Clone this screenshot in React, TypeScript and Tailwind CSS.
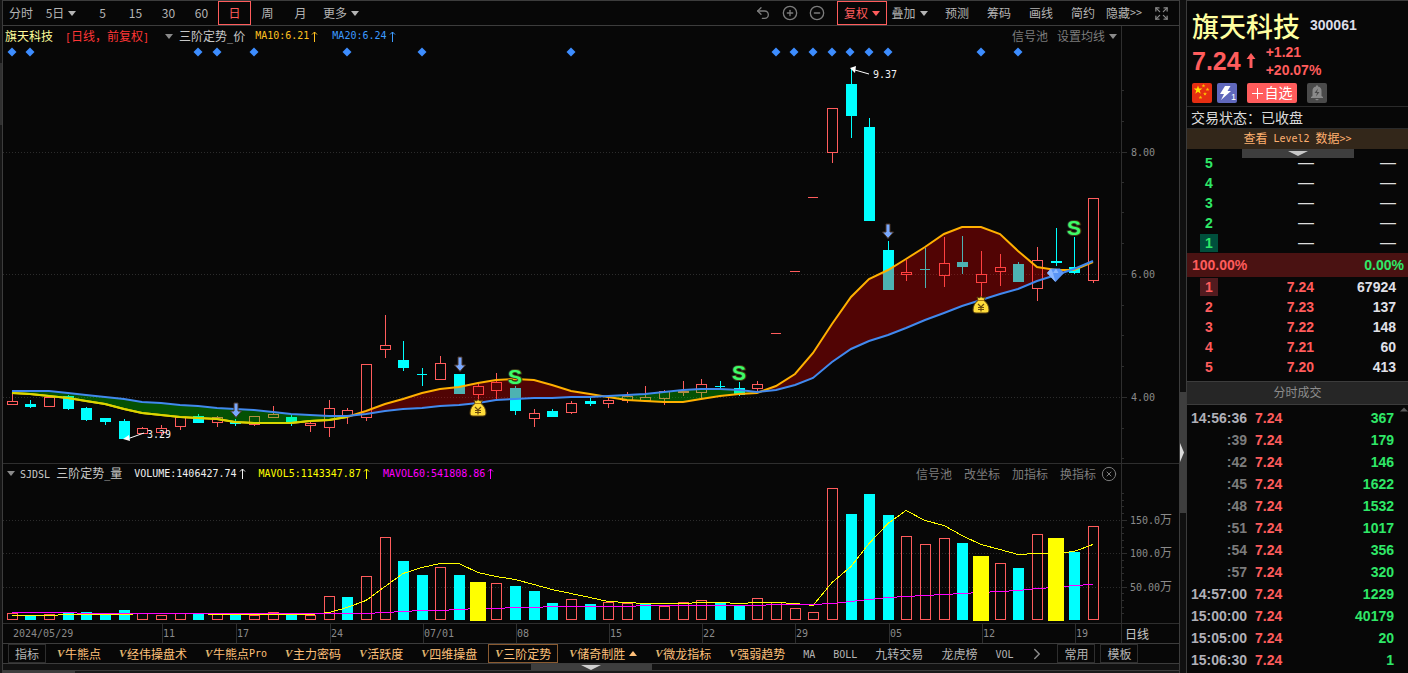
import React from "react";
import { Undo2, CirclePlus, CircleMinus, Expand, CircleX, ChevronRight } from "lucide-react";

const RED = "#ff5c5c";
const CYAN = "#00ffff";
const MONO = "'DejaVu Sans Mono', monospace";

type Candle = { up: boolean; high: number; top: number; bottom: number; low: number };

// [up, high, body top, body bottom, low] in chart units
const rawCandles: [number, number, number, number, number][] = [
  [1, 393, 401, 404, 404], [0, 400, 404, 406, 407], [1, 397, 397, 406, 406], [0, 395, 396, 408, 409],
  [0, 407, 408, 419, 420], [0, 418, 418, 421, 424], [0, 419, 421, 438, 438], [1, 427, 428, 433, 433],
  [1, 425, 428, 432, 434], [1, 417, 417, 426, 429], [0, 414, 416, 422, 422], [1, 416, 417, 422, 426],
  [0, 419, 422, 423, 425], [1, 416, 416, 424, 425], [1, 406, 414, 417, 417], [0, 415, 417, 422, 425],
  [1, 420, 423, 425, 431], [1, 400, 408, 427, 436], [1, 408, 410, 415, 423], [1, 364, 364, 417, 420],
  [1, 315, 345, 349, 357], [0, 341, 360, 367, 370], [0, 368, 374, 374, 385], [1, 356, 363, 379, 379],
  [0, 374, 374, 393, 393], [1, 384, 386, 394, 400], [1, 373, 382, 390, 399], [0, 386, 388, 410, 414],
  [1, 409, 413, 418, 426], [0, 409, 411, 416, 416], [1, 401, 403, 412, 413], [0, 398, 401, 403, 405],
  [1, 397, 400, 403, 407], [1, 392, 396, 400, 402], [1, 386, 397, 400, 400], [1, 390, 391, 398, 404],
  [1, 381, 391, 392, 395], [1, 379, 384, 392, 398], [0, 381, 386, 386, 388], [0, 382, 388, 394, 395],
  [1, 381, 384, 388, 391], [1, 333, 333, 333, 333], [1, 271, 271, 271, 271], [1, 197, 197, 197, 197],
  [1, 108, 108, 152, 162], [0, 69, 84, 115, 137], [0, 118, 127, 220, 220], [0, 241, 250, 289, 289],
  [1, 260, 272, 274, 280], [0, 248, 269, 269, 287], [1, 237, 263, 275, 286], [0, 236, 262, 266, 273],
  [1, 251, 274, 282, 296], [1, 254, 267, 271, 285], [0, 262, 264, 281, 281], [1, 247, 260, 288, 300],
  [0, 228, 261, 262, 265], [0, 237, 267, 272, 273], [1, 198, 198, 280, 282],
];
const candles: Candle[] = rawCandles.map(([u, high, top, bottom, low]) => ({ up: u === 1, high, top, bottom, low }));

const ma10 = [
  393, 394, 396, 398, 401, 404, 409, 413, 415, 417, 418, 419, 422, 423, 423, 423, 421, 420, 417, 411,
  404, 399, 393, 389, 387, 383, 380, 379, 380, 385, 391, 394, 397, 400, 401, 402, 402, 399, 396, 394,
  393, 386, 374, 353, 324, 297, 279, 270, 259, 247, 234, 227, 227, 234, 251, 267, 270, 270, 262,
];
const ma20 = [
  391, 391, 391, 393, 395, 397, 399, 402, 403, 405, 406, 408, 409, 410, 412, 414, 415, 416, 416, 414,
  411, 409, 408, 406, 405, 403, 400, 399, 398, 398, 397, 397, 396, 395, 394, 392, 390, 389, 389, 390,
  392, 390, 385, 378, 362, 349, 341, 335, 328, 320, 313, 306, 300, 294, 289, 281, 275, 269, 261,
];

// r: hollow red, c: solid cyan, y: highlighted wide bar
const volumes: [string, number][] = [
  ["r", 613], ["c", 616], ["r", 614], ["c", 613], ["c", 612], ["c", 615], ["c", 610], ["r", 613], ["r", 615],
  ["r", 613], ["c", 613], ["r", 614], ["c", 614], ["r", 615], ["r", 612], ["c", 615], ["r", 615], ["r", 596],
  ["c", 597], ["r", 576], ["r", 537], ["c", 561], ["c", 575], ["r", 567], ["c", 575], ["y", 582], ["r", 583],
  ["c", 586], ["c", 591], ["c", 603], ["r", 599], ["c", 604], ["r", 602], ["r", 603], ["c", 603], ["r", 606],
  ["r", 602], ["r", 600], ["c", 603], ["c", 606], ["r", 598], ["r", 602], ["r", 608], ["r", 612], ["r", 488],
  ["c", 514], ["c", 494], ["c", 515], ["r", 536], ["r", 544], ["r", 538], ["c", 543], ["y", 556], ["r", 563],
  ["c", 568], ["r", 534], ["y", 538], ["c", 552], ["r", 526],
];
const mavol5 = [
  615, 615, 615, 614, 614, 614, 614, 613, 613, 613, 613, 614, 614, 614, 614, 614, 614, 612, 607, 600,
  586, 573, 567, 563, 563, 572, 576, 579, 584, 589, 593, 597, 601, 602, 603, 603, 603, 602, 602, 603,
  602, 602, 603, 605, 582, 566, 543, 523, 510, 520, 525, 535, 544, 549, 554, 553, 553, 551, 544,
];
const mavol60 = [
  612, 612, 612, 612, 613, 613, 613, 613, 613, 613, 613, 613, 613, 613, 613, 613, 613, 613, 613, 613,
  612, 611, 610, 610, 609, 608, 608, 607, 607, 606, 606, 606, 606, 606, 605, 605, 605, 605, 605, 605,
  605, 604, 604, 604, 603, 601, 599, 597, 596, 595, 594, 593, 592, 591, 590, 588, 587, 585, 584,
];

const xAt = (i: number) => Math.floor(12.3 + i * 18.638);
const linePoints = (ys: number[]) => ys.map((y, i) => `${xAt(i)},${y}`).join(" ");

// Closed regions between the two averages, split wherever they cross.
function regions() {
  const out: { red: boolean; d: string }[] = [];
  let upper: string[] = [];
  let lower: string[] = [];
  const flush = (red: boolean) => {
    if (upper.length > 1) out.push({ red, d: `M${[...upper, ...lower.reverse()].join("L")}Z` });
    upper = [];
    lower = [];
  };
  for (let i = 0; i < ma10.length; i++) {
    const diff = ma20[i] - ma10[i];
    if (i > 0) {
      const prev = ma20[i - 1] - ma10[i - 1];
      if (prev * diff < 0) {
        const t = prev / (prev - diff);
        const x = xAt(i - 1) + t * (xAt(i) - xAt(i - 1));
        const y = ma10[i - 1] + t * (ma10[i] - ma10[i - 1]);
        upper.push(`${x},${y}`);
        lower.push(`${x},${y}`);
        flush(prev > 0);
        upper.push(`${x},${y}`);
        lower.push(`${x},${y}`);
      }
    }
    upper.push(`${xAt(i)},${ma10[i]}`);
    lower.push(`${xAt(i)},${ma20[i]}`);
  }
  flush(ma20[ma10.length - 1] > ma10[ma10.length - 1]);
  return out;
}

function DownMark({ x, y }: { x: number; y: number }) {
  return (
    <path
      d={`M${x - 2} ${y - 7}h4v8h3.5l-5.5 6.5l-5.500 -6.5h3.500z`}
      fill="#78a8ff"
      stroke="#4a3526"
      strokeWidth="1"
    />
  );
}

function SellMark({ x, y }: { x: number; y: number }) {
  return (
    <text
      x={x}
      y={y + 7}
      textAnchor="middle"
      fontFamily="'Liberation Sans', sans-serif"
      fontSize="21"
      fontWeight="700"
      fill="#3dfc68"
      stroke="#3a3a1c"
      strokeWidth="2"
      paintOrder="stroke"
    >
      S
    </text>
  );
}

function MoneyBag({ x, y }: { x: number; y: number }) {
  return (
    <g transform={`translate(${x} ${y})`}>
      <path
        d="M-4 -8L-1.500 -7L0 -8.500L2 -7L4.500 -8L3 -4.500C6 -2.500 8 1 8 5C8 7 7 8 5 8H-5C-7 8 -8 7 -8 5C-8 1 -6 -2.500 -3 -4.500Z"
        fill="#ffdc3a"
        stroke="#5a4010"
        strokeWidth="1"
      />
      <path d="M-3 -4.500H3" stroke="#a87a10" strokeWidth="1" />
      <path d="M-3 -1L0 2L3 -1M0 2V6.500M-3 2.500H3M-3 4.500H3" stroke="#6b4a0c" strokeWidth="1.200" fill="none" />
    </g>
  );
}

const diamondX = [12, 30, 198, 217, 254, 347, 422, 571, 776, 794, 813, 832, 850, 869, 888, 981, 1018];

function PriceChart() {
  return (
    <svg viewBox="3 46 1176 417" className="block h-auto w-full" role="img" aria-label="K线图">
      <g stroke="#2c2c2c" strokeDasharray="1 2" shapeRendering="crispEdges">
        <path d="M3 152.500H1121M3 274.500H1121M3 397.500H1121" />
      </g>
      <g stroke="#2e2e2e" shapeRendering="crispEdges">
        <path d="M1121.500 46V463" />
        <path d="M1121 152.500h6M1121 274.500h6M1121 397.500h6" />
        <path d="M1121 90.500h3M1121 121.500h3M1121 182.500h3M1121 212.500h3M1121 243.500h3M1121 305.500h3M1121 335.500h3M1121 366.500h3M1121 428.500h3M1121 458.500h3" />
      </g>
      <g fontFamily={MONO} fontSize="10" fill="#8a8a8a">
        <text x="1131" y="156">8.00</text>
        <text x="1131" y="278">6.00</text>
        <text x="1131" y="401">4.00</text>
      </g>
      {diamondX.map((x) => (
        <path key={x} d={`M${x} 47.500l4.500 4.500l-4.500 4.500l-4.500 -4.500z`} fill="#3d8dff" />
      ))}
      <g shapeRendering="crispEdges">
        {candles.map((c, i) => {
          const x = xAt(i);
          const color = c.up ? RED : CYAN;
          const flat = c.bottom === c.top;
          return (
            <g key={i}>
              {c.high < c.top && <rect x={x} y={c.high} width="1" height={c.top - c.high} fill={color} />}
              {c.low > c.bottom && <rect x={x} y={c.bottom} width="1" height={c.low - c.bottom + 1} fill={color} />}
              {flat || !c.up ? (
                <rect x={x - 5} y={c.top} width={flat ? 10 : 11} height={c.bottom - c.top + 1} fill={color} />
              ) : (
                <rect x={x - 4.5} y={c.top + 0.5} width="10" height={c.bottom - c.top} fill="none" stroke={color} />
              )}
            </g>
          );
        })}
        {regions().map((r, i) => (
          <path key={i} d={r.d} fill={r.red ? "#ff0000" : "#00ff00"} fillOpacity="0.3" />
        ))}
      </g>
      <polyline points={linePoints(ma10)} fill="none" stroke="#ffb000" strokeWidth="2" />
      <polyline points={linePoints(ma10.slice(0, 19))} fill="none" stroke="#d8d800" strokeWidth="2" />
      <polyline points={linePoints(ma20)} fill="none" stroke="#4189ee" strokeWidth="2" />

      <g fontFamily={MONO} fontSize="10" fill="#f2f2f2">
        <text x="147" y="438">3.29</text>
        <text x="873" y="78">9.37</text>
      </g>
      <path d="M144 433L130 438M869 74L855 70" stroke="#fff" fill="none" />
      <path d="M123 439l6 -4l1 6zM850 68l6 -2l-1 7z" fill="#fff" />

      <DownMark x={236} y={410} />
      <DownMark x={460} y={364} />
      <DownMark x={888} y={231} />
      <MoneyBag x={478} y={408} />
      <MoneyBag x={981} y={305} />
      <SellMark x={515} y={377} />
      <SellMark x={739} y={373} />
      <SellMark x={1074} y={228} />
      <g>
        <path d="M1051 268.500H1060L1064 273L1055.500 282L1047 273Z" fill="#5b95f5" />
        <path d="M1047 273L1051 268.500L1053 273L1055.500 282ZM1056 268.500L1058.500 273H1053Z" fill="#8db8ff" />
      </g>
    </svg>
  );
}

function VolumeChart() {
  const minor = [493, 500, 506, 513, 527, 533, 540, 547, 560, 567, 573, 580, 593, 600, 607, 613];
  return (
    <svg viewBox="3 483 1176 140" className="block h-auto w-full" role="img" aria-label="成交量">
      <path
        d="M3 520.500H1121M3 553.500H1121M3 587.500H1121"
        stroke="#2c2c2c"
        strokeDasharray="1 2"
        shapeRendering="crispEdges"
      />
      <path
        d={"M1121.500 483V623M1121 520.500h6M1121 553.500h6M1121 587.500h6" + minor.map((y) => `M1121 ${y + 0.5}h3`).join("")}
        stroke="#2e2e2e"
        shapeRendering="crispEdges"
      />
      <g fontFamily={MONO} fontSize="10" fill="#8a8a8a">
        {([["150.0", 524], ["100.0", 557], ["50.00", 591]] as [string, number][]).map(([t, y]) => (
          <text key={t} x="1130" y={y}>
            {t}
            <tspan fontFamily="'Noto Sans CJK SC', sans-serif" fontSize="12">万</tspan>
          </text>
        ))}
      </g>
      <g shapeRendering="crispEdges">
        {volumes.map(([k, y], i) =>
          k === "r" ? (
            <rect key={i} x={xAt(i) - 4.5} y={y + 0.5} width="10" height={619 - y} fill="none" stroke={RED} />
          ) : k === "c" ? (
            <rect key={i} x={xAt(i) - 5} y={y} width="11" height={620 - y} fill={CYAN} />
          ) : null,
        )}
        <polyline points={linePoints(mavol5.map((y) => y + 0.5))} fill="none" stroke="#ffff00" />
        <polyline points={linePoints(mavol60.map((y) => y + 0.5))} fill="none" stroke="#ff00ff" />
        {volumes.map(([k, y], i) =>
          k === "y" ? <rect key={i} x={xAt(i) - 8} y={y} width="16" height={621 - y} fill="#ffff00" /> : null,
        )}
      </g>
    </svg>
  );
}

function Mono({ children, className = "" }: { children: React.ReactNode; className?: string }) {
  return (
    <span className={`whitespace-pre font-['DejaVu_Sans_Mono',monospace] text-[10px] ${className}`}>{children}</span>
  );
}

function Caret({ className = "" }: { className?: string }) {
  return (
    <svg viewBox="0 0 8 5" className={`h-[5px] w-2 shrink-0 ${className}`} aria-hidden="true">
      <path d="M0 0H8L4 5Z" fill="currentColor" />
    </svg>
  );
}

function UpArrow() {
  return (
    <svg viewBox="0 0 7 11" className="h-[11px] w-[7px] shrink-0" aria-hidden="true">
      <path d="M3.500 11V1M1 3.500L3.500 1L6 3.500" stroke="currentColor" fill="none" />
    </svg>
  );
}

const periods = ["5", "15", "30", "60"];

function Toolbar() {
  const cell = "flex h-full items-center justify-center";
  return (
    <div className="flex h-[26px] items-center border-y border-[#3c3c3c] text-[#b4b4b4]">
      <button className={`${cell} w-9`}>分时</button>
      <button className={`${cell} mr-[3px] w-11 gap-1`}>5日<Caret /></button>
      {periods.map((p) => (
        <button key={p} className={`${cell} w-[33px]`}>{p}</button>
      ))}
      <button className={`${cell} w-[33px] border border-[#ff5c5c] text-[#ff5c5c]`}>日</button>
      <button className={`${cell} w-[33px]`}>周</button>
      <button className={`${cell} w-[33px]`}>月</button>
      <button className={`${cell} w-12 gap-1`}>更多<Caret /></button>
      <div className="flex-1" />
      <div className="mr-3 flex items-center gap-[11px] text-[#7c7c7c]">
        <button aria-label="撤销"><Undo2 size={16} strokeWidth={2} /></button>
        <button aria-label="放大"><CirclePlus size={16} strokeWidth={2} /></button>
        <button aria-label="缩小"><CircleMinus size={16} strokeWidth={2} /></button>
      </div>
      <button className={`${cell} w-[50px] gap-1 border border-[#ff5c5c] text-[#ff5c5c]`}>复权<Caret /></button>
      <button className={`${cell} w-[49px] gap-1 pr-1`}>叠加<Caret /></button>
      <button className={`${cell} w-[42px]`}>预测</button>
      <button className={`${cell} w-[42px]`}>筹码</button>
      <button className={`${cell} w-[42px]`}>画线</button>
      <button className={`${cell} w-[42px]`}>简约</button>
      <button className={`${cell} w-10`}>隐藏<Mono>&gt;&gt;</Mono></button>
      <button className={`${cell} mx-[10px] w-[15px] text-[#8a8a8a]`} aria-label="全屏"><Expand size={15} strokeWidth={2} /></button>
    </div>
  );
}

const dates: [string, string][] = [
  ["flex-[159]", "2024/05/29"], ["flex-[74]", "11"], ["flex-[94]", "17"], ["flex-[93]", "24"], ["flex-[93]", "07/01"],
  ["flex-[93]", "08"], ["flex-[93]", "15"], ["flex-[93]", "22"], ["flex-[94]", "29"], ["flex-[93]", "05"],
  ["flex-[93]", "12"], ["flex-[46]", "19"],
];

function Vip() {
  return (
    <span className="w-2 text-left font-['Liberation_Serif',serif] text-[11px] font-bold italic text-[#e0b870]">V</span>
  );
}

const vipTabs = ["牛熊点", "经伟操盘术", "牛熊点Pro", "主力密码", "活跃度", "四维操盘", "三阶定势", "储奇制胜", "微龙指标", "强弱趋势"];

function IndicatorTabs() {
  return (
    <div className="flex h-[21px] items-center overflow-hidden whitespace-nowrap border-y border-[#3c3c3c] pl-[5px] text-[#b4b4b4]">
      <button className="mr-[2px] h-[19px] w-[38px] shrink-0 border border-[#2e2e2e]">指标</button>
      {vipTabs.map((t) => (
        <button
          key={t}
          className={
            t === "三阶定势"
              ? "mx-[2px] flex h-[19px] shrink-0 items-center border border-[#8a5a30] px-[6px] text-[#ffc07a]"
              : "flex h-[19px] shrink-0 items-center px-[9px] text-[#ffc07a]"
          }
        >
          <Vip />
          {t === "牛熊点Pro" ? <>牛熊点<Mono>Pro</Mono></> : t}
          {t === "储奇制胜" && <Caret className="ml-1 rotate-180" />}
        </button>
      ))}
      <button className="shrink-0 px-[9px]"><Mono>MA</Mono></button>
      <button className="shrink-0 px-[9px]"><Mono>BOLL</Mono></button>
      <button className="shrink-0 px-[9px]">九转交易</button>
      <button className="shrink-0 px-[9px]">龙虎榜</button>
      <button className="shrink-0 px-[9px]"><Mono>VOL</Mono></button>
      <button className="shrink-0 px-[6px] text-[#8a8a8a]" aria-label="更多指标"><ChevronRight size={18} strokeWidth={2} /></button>
      <button className="ml-[5px] h-[19px] w-[38px] shrink-0 border border-[#2e2e2e]">常用</button>
      <button className="ml-[5px] h-[19px] w-[38px] shrink-0 border border-[#2e2e2e]">模板</button>
    </div>
  );
}

const asks = ["5", "4", "3", "2", "1"];
const bids: [string, string, string][] = [
  ["1", "7.24", "67924"], ["2", "7.23", "137"], ["3", "7.22", "148"], ["4", "7.21", "60"], ["5", "7.20", "413"],
];
const trades: [string, string][] = [
  ["14:56:36", "367"], [":39", "179"], [":42", "146"], [":45", "1622"], [":48", "1532"], [":51", "1017"],
  [":54", "356"], [":57", "320"], ["14:57:00", "1229"], ["15:00:00", "40179"], ["15:05:00", "20"], ["15:06:30", "1"],
];

const starPath = (cx: number, cy: number, r: number) =>
  "M" +
  Array.from({ length: 10 }, (_, k) => {
    const a = -Math.PI / 2 + (k * Math.PI) / 5;
    const q = k % 2 ? r * 0.4 : r;
    return `${(cx + q * Math.cos(a)).toFixed(2)} ${(cy + q * Math.sin(a)).toFixed(2)}`;
  }).join("L") +
  "Z";

function QuotePanel() {
  return (
    <aside className="w-[221px] shrink-0 border-t border-[#3c3c3c] font-['Liberation_Sans','Noto_Sans_CJK_SC',sans-serif] text-sm">
      <div className="flex h-11 items-center gap-[10px] pl-[5px] pt-1">
        <h1 className="font-['Noto_Sans_CJK_SC',sans-serif] text-[27px] font-medium leading-none text-[#ffffa0]">旗天科技</h1>
        <span className="font-bold text-[#dcdce8]">300061</span>
      </div>
      <div className="flex h-8 items-center pl-[5px] text-[#ff5c5c]">
        <span className="text-[25px] font-bold leading-none">7.24</span>
        <svg viewBox="0 0 10 16" className="ml-[5px] h-4 w-[10px]" aria-label="上涨">
          <path d="M5 0L9.500 6H6.500V15H3.500V6H0.500Z" fill="currentColor" />
        </svg>
        <div className="ml-[10px] font-bold leading-[18px]">
          <div>+1.21</div>
          <div>+20.07%</div>
        </div>
      </div>
      <div className="flex h-[30px] items-center border-b border-[#2a2a2a] pl-[5px] pt-[3px]">
        <svg viewBox="0 0 20 20" className="h-5 w-5" aria-label="中国">
          <rect width="20" height="20" rx="2" fill="#e62e12" />
          <path d={starPath(6, 7, 4.6)} fill="#ffe000" />
          <path
            d={starPath(11.5, 2.8, 2) + starPath(15.5, 6.5, 2) + starPath(13, 11, 2) + starPath(8.5, 14.5, 2)}
            fill="#ffc400"
          />
        </svg>
        <svg viewBox="0 0 20 20" className="ml-[5px] h-5 w-5" aria-label="闪电">
          <rect width="20" height="20" rx="2" fill="#6068bc" />
          <path d="M8 3H13.500L10.500 8H14L4 17L7 11H3Z" fill="#fff" />
          <text x="14" y="17" fontSize="9" fontFamily="'Liberation Sans', sans-serif" fill="#fff">1</text>
        </svg>
        <button className="ml-[10px] flex h-5 w-[50px] items-center justify-center rounded-[2px] bg-[#ff5c5c] text-white">
          <svg viewBox="0 0 11 11" className="mr-[2px] h-[11px] w-[11px]" aria-hidden="true">
            <path d="M5.500 0V11M0 5.500H11" stroke="#fff" />
          </svg>
          自选
        </button>
        <button className="ml-[10px]" aria-label="提醒">
          <svg viewBox="0 0 20 20" className="h-5 w-5">
            <rect width="20" height="20" rx="2" fill="#4a4a4a" />
            <path d="M4 15V14L5.500 13V8A4.500 4.500 0 0 1 9 3.500V2.500H11V3.500A4.500 4.500 0 0 1 14.500 8V13L16 14V15ZM8 16H12L10 17.500Z" fill="#8a8a8a" />
            <path d="M11 5.500L7.500 10H10L9 13.500L12.500 9H10Z" fill="#4a4a4a" />
          </svg>
        </button>
      </div>
      <div className="flex h-[22px] items-center border-b border-[#2a2a2a] pl-[4px] text-[#dcdcdc]">交易状态：已收盘</div>
      <div className="relative">
        <a href="#level2" className="flex h-5 items-center justify-center bg-[#33271a] text-xs text-[#ffb070]">
          查看<Mono> Level2 </Mono>数据<Mono>&gt;&gt;</Mono>
        </a>
        <div className="absolute left-[55px] top-5 flex h-[9px] w-28 justify-center bg-[#3e3e3e] pt-[2px] text-[#c8c8c8]">
          <svg viewBox="0 0 20 5" className="h-[5px] w-5" aria-hidden="true"><path d="M0 0H20L10 5Z" fill="currentColor" /></svg>
        </div>
      </div>
      <table className="mt-[4px] w-full table-fixed border-collapse font-bold">
        <tbody>
          {asks.map((n) => (
            <tr key={n} className="h-5 text-[#dcdcdc]">
              <td className="w-[43px] p-0 pl-[13px]">
                <span className={`block h-[18px] w-[18px] text-center leading-[18px] text-[#2fe868] ${n === "1" ? "bg-[#004f3c]" : ""}`}>{n}</span>
              </td>
              <td className="w-[84px] p-0 text-right text-base font-normal leading-5">—</td>
              <td className="p-0 pr-3 text-right text-base font-normal leading-5">—</td>
            </tr>
          ))}
        </tbody>
      </table>
      <div className="flex h-6 items-center justify-between bg-[#4a1212] pl-[5px] pr-1 font-bold">
        <span className="text-[#ff5c5c]">100.00%</span>
        <span className="text-[#2fe868]">0.00%</span>
      </div>
      <table className="w-full table-fixed border-collapse font-bold">
        <tbody>
          {bids.map(([n, price, vol]) => (
            <tr key={n} className="h-5 text-[#ff5c5c]">
              <td className="w-[43px] p-0 pl-[13px]">
                <span className={`block h-[18px] w-[18px] text-center leading-[18px] ${n === "1" ? "bg-[#521b1f]" : ""}`}>{n}</span>
              </td>
              <td className="w-[84px] p-0 text-right leading-5">{price}</td>
              <td className="p-0 pr-3 text-right leading-5 text-[#e0e0e8]">{vol}</td>
            </tr>
          ))}
        </tbody>
      </table>
      <h2 className="mt-[4px] flex h-6 items-center justify-center border-y border-[#3c3c3c] bg-[#262626] text-xs text-[#8c8c8c]">分时成交</h2>
      <div className="relative pt-[2px]">
        <svg viewBox="0 0 10 5" className="absolute right-0 top-[2px] h-[5px] w-2" aria-hidden="true">
          <path d="M5 0L10 5H0Z" fill="#5a5a5a" />
        </svg>
        <table className="w-full table-fixed border-collapse font-bold">
          <tbody>
            {trades.map(([time, vol]) => (
              <tr key={time} className="h-[22px]">
                <td className={`w-[60px] p-0 text-right ${time.startsWith(":") ? "text-[#7c7c7c]" : "text-[#b0b0b8]"}`}>{time}</td>
                <td className="w-[60px] p-0 pl-2 text-[#ff5c5c]">7.24</td>
                <td className="p-0 pr-[14px] text-right text-[#2fe868]">{vol}</td>
              </tr>
            ))}
          </tbody>
        </table>
      </div>
    </aside>
  );
}

export default function App() {
  return (
    <div className="flex h-screen overflow-hidden bg-[#070707] font-['Noto_Sans_CJK_SC',sans-serif] text-xs leading-none">
      <div className="flex w-[3px] shrink-0 flex-col border-r border-[#3c3c3c] bg-[#161616]">
        <div className="h-[63px] bg-[#161616]" />
        <div className="h-[62px] bg-[#303030]" />
      </div>
      <main className="flex min-w-0 flex-1 flex-col">
        <Toolbar />
        <section className="border-b border-[#2e2e2e]">
          <div className="flex h-5 items-center whitespace-nowrap pl-[2px]">
            <span className="text-[#ffff9c]">旗天科技</span>
            <span className="ml-3 text-[#ff3636]"><Mono>[</Mono>日线，前复权<Mono>]</Mono></span>
            <Caret className="ml-4 text-[#8a8a8a]" />
            <span className="ml-[6px] text-[#c8c8c8]">三阶定势<Mono>_</Mono>价</span>
            <span className="ml-[10px] flex items-center gap-[2px] text-[#ffc020]"><Mono>MA10:6.21</Mono><UpArrow /></span>
            <span className="ml-[14px] flex items-center gap-[2px] text-[#3d9bff]"><Mono>MA20:6.24</Mono><UpArrow /></span>
            <div className="flex-1" />
            <div className="mr-[57px] flex h-5 items-center gap-[9px] border-r border-[#2e2e2e] pr-1 text-[#7c7c7c]">
              <button>信号池</button>
              <button className="flex items-center gap-1">设置均线<Caret className="text-[#8a8a8a]" /></button>
            </div>
          </div>
          <PriceChart />
        </section>
        <section>
          <div className="flex h-[19px] items-center whitespace-nowrap pl-1">
            <Caret className="text-[#8a8a8a]" />
            <span className="ml-[5px] text-[#c8c8c8]"><Mono>SJDSL </Mono>三阶定势<Mono>_</Mono>量</span>
            <span className="ml-3 flex items-center gap-[2px] text-[#f0f0f0]"><Mono>VOLUME:1406427.74</Mono><UpArrow /></span>
            <span className="ml-[13px] flex items-center gap-[2px] text-[#ffff00]"><Mono>MAVOL5:1143347.87</Mono><UpArrow /></span>
            <span className="ml-[13px] flex items-center gap-[2px] text-[#ff00ff]"><Mono>MAVOL60:541808.86</Mono><UpArrow /></span>
            <div className="flex-1" />
            <div className="mr-[57px] flex h-[19px] items-center gap-3 border-r border-[#2e2e2e] pr-1 text-[#7c7c7c]">
              <button>信号池</button>
              <button>改坐标</button>
              <button>加指标</button>
              <button>换指标</button>
              <button className="-ml-[7px]" aria-label="关闭"><CircleX size={16} strokeWidth={1.5} /></button>
            </div>
          </div>
          <VolumeChart />
        </section>
        <div className="flex h-5 border-t border-[#2e2e2e] text-[#8a8a8a]">
          {dates.map(([grow, label], i) => (
            <div key={label} className={`min-w-0 ${grow}`}>
              <div className={`flex h-full items-center ${i === 0 ? "pl-[10px]" : "border-l border-[#2e2e2e]"}`}>
                <Mono>{label}</Mono>
              </div>
            </div>
          ))}
          <div className="min-w-0 flex-[58]">
            <div className="flex h-full items-center border-l border-[#2e2e2e] pl-[3px] text-[#c8c8c8]">日线</div>
          </div>
        </div>
        <IndicatorTabs />
        <div className="flex h-[6px] justify-center bg-[#111111]">
          <div className="flex h-[6px] w-[121px] justify-center bg-[#3e3e3e] pt-[1px] text-[#d0d0d0]">
            <svg viewBox="0 0 20 5" className="h-[5px] w-5" aria-hidden="true"><path d="M0 0H20L10 5Z" fill="currentColor" /></svg>
          </div>
        </div>
        <div className="min-h-0 flex-1 border-t border-[#3c3c3c] bg-[#1a1a1a]">
          <div className="h-full w-[72px] bg-[#3e3e3e]" />
        </div>
      </main>
      <div className="flex w-2 shrink-0 items-start border-x border-[#3c3c3c] bg-[#101010] pt-[392px]">
        <div className="flex h-[121px] w-full items-center bg-[#3e3e3e]">
          <svg viewBox="0 0 4 19" className="h-[19px] w-1" aria-hidden="true"><path d="M0 0L4 9.500L0 19Z" fill="#dcdcdc" /></svg>
        </div>
      </div>
      <QuotePanel />
    </div>
  );
}
